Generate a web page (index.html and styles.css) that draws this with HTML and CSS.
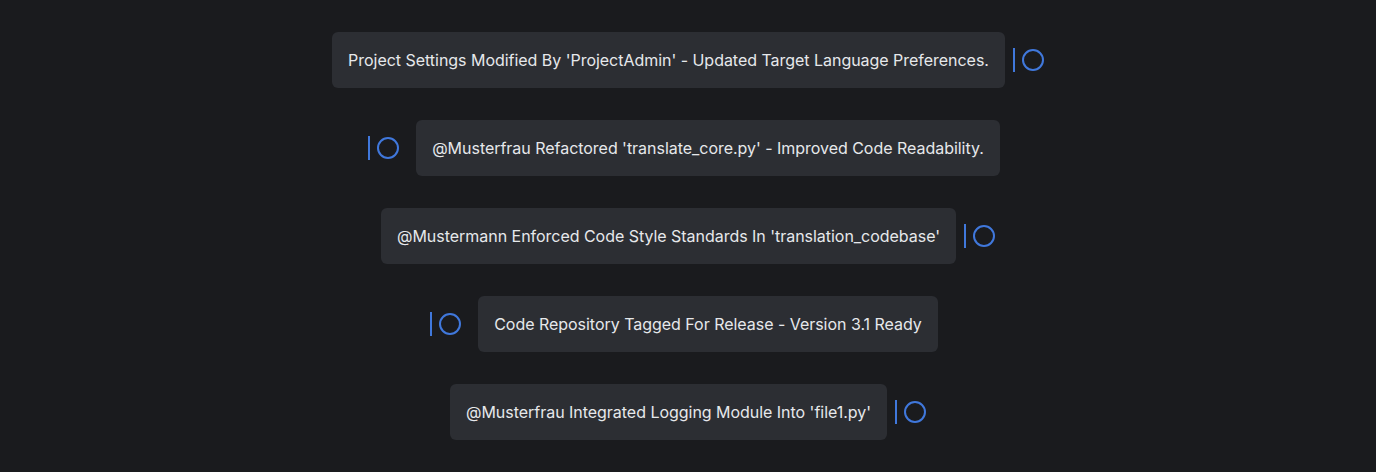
FILE: index.html
```html
<!DOCTYPE html>
<html lang="en">
<head>
<meta charset="utf-8">
<title>Timeline</title>
<link rel="stylesheet" href="styles.css">
</head>
<body>
<div class="timeline">
  <div class="row">
    <div class="card">Project Settings Modified By 'ProjectAdmin' - Updated Target Language Preferences.</div>
    <div class="marker marker-right"><span class="bar"></span><span class="dot"></span></div>
  </div>
  <div class="row row-rev">
    <div class="marker marker-left"><span class="bar"></span><span class="dot"></span></div>
    <div class="card">@Musterfrau Refactored 'translate_core.py' - Improved Code Readability.</div>
  </div>
  <div class="row">
    <div class="card">@Mustermann Enforced Code Style Standards In 'translation_codebase'</div>
    <div class="marker marker-right"><span class="bar"></span><span class="dot"></span></div>
  </div>
  <div class="row row-rev">
    <div class="marker marker-left"><span class="bar"></span><span class="dot"></span></div>
    <div class="card">Code Repository Tagged For Release - Version 3.1 Ready</div>
  </div>
  <div class="row">
    <div class="card">@Musterfrau Integrated Logging Module Into 'file1.py'</div>
    <div class="marker marker-right"><span class="bar"></span><span class="dot"></span></div>
  </div>
</div>
</body>
</html>
```

FILE: styles.css
```css
html, body {
  margin: 0;
  padding: 0;
  background: #1a1b1e;
}
body {
  font-family: Inter, "Noto Sans", sans-serif;
  height: 472px;
  overflow: hidden;
}
.timeline {
  display: flex;
  flex-direction: column;
  gap: 32px;
  padding-top: 32px;
}
.row {
  display: flex;
  justify-content: center;
  align-items: center;
}
.row-rev {
  padding-right: 8px;
}
.card {
  background: #2c2e33;
  color: #e6e8eb;
  font-size: 16px;
  line-height: 24px;
  letter-spacing: -0.03px;
  padding: 16px;
  border-radius: 6px;
  white-space: nowrap;
}
.marker {
  display: flex;
  align-items: center;
  gap: 7px;
}
.marker-right {
  margin-left: 8px;
}
.marker-left {
  margin-right: 17px;
}
.bar {
  width: 2px;
  height: 24px;
  background: #4078dc;
}
.dot {
  width: 18px;
  height: 18px;
  border: 2px solid #4078dc;
  border-radius: 50%;
}
```
